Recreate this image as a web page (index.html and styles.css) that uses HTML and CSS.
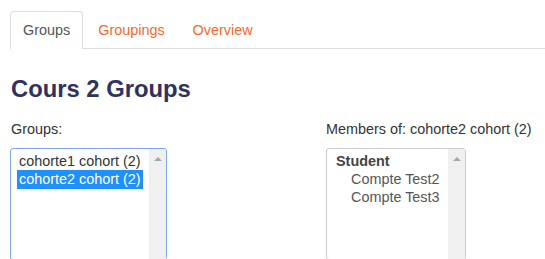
FILE: index.html
```html
<!DOCTYPE html>
<html>
<head>
<meta charset="utf-8">
<link rel="stylesheet" href="styles.css">
</head>
<body>
<ul class="tabs">
  <li class="tab active"><span>Groups</span></li>
  <li class="tab"><a href="#">Groupings</a></li>
  <li class="tab"><a href="#">Overview</a></li>
</ul>
<h2 class="title">Cours 2 Groups</h2>
<div class="columns">
  <div class="col col-left">
    <div class="label">Groups:</div>
    <div class="listbox focused">
      <div class="items">
        <div class="item">cohorte1 cohort (2)</div>
        <div class="item selected">cohorte2 cohort (2)</div>
      </div>
      <div class="scrollbar"><span class="arrow"></span></div>
    </div>
  </div>
  <div class="col col-right">
    <div class="label">Members of: cohorte2 cohort (2)</div>
    <div class="listbox members">
      <div class="items">
        <div class="item group">Student</div>
        <div class="item indent">Compte Test2</div>
        <div class="item indent">Compte Test3</div>
      </div>
      <div class="scrollbar"><span class="arrow"></span></div>
    </div>
  </div>
</div>
</body>
</html>
```
FILE: styles.css
```css
html, body {
  margin: 0;
  padding: 0;
  background: #fff;
  font-family: "Liberation Sans", Arial, sans-serif;
  font-size: 14.4px;
  color: #333;
  overflow: hidden;
}
.tabs {
  list-style: none;
  margin: 11px 0 0 10px;
  padding: 0;
  display: flex;
  border-bottom: 1px solid #ddd;
  height: 37px;
}
.tab {
  margin-right: 2px;
  padding: 8px 12px;
  line-height: 20px;
  border: 1px solid transparent;
  border-bottom: none;
  border-radius: 4px 4px 0 0;
}
.tab.active {
  border-color: #ddd;
  background: #fff;
  color: #555;
  height: 21px;
  margin-bottom: -1px;
}
.tab a {
  color: #f9692a;
  text-decoration: none;
}
.title {
  margin: 26px 0 0 11px;
  font-size: 23.8px;
  font-weight: bold;
  color: #30315f;
  line-height: 28px;
}
.columns {
  display: flex;
  margin-top: 17px;
}
.col-left { margin-left: 10px; width: 316px; }
.label {
  line-height: 18px;
  height: 18px;
  margin-left: 1px;
}
.col-right .label { margin-left: 0; }
.listbox {
  margin-top: 10px;
  height: 112px;
  display: flex;
  border: 1px solid #ccc;
  border-radius: 3px;
  box-sizing: border-box;
}
.focused {
  width: 157px;
  border-color: #7ea6ee;
}
.members { width: 140px; }
.items {
  flex: 1;
  padding: 3px 5px 0 6px;
  line-height: 18px;
}
.item { white-space: nowrap; padding-left: 2px; }
.selected {
  background: #1e90ff;
  color: #fff;
  line-height: 19px;
  width: 124px;
}
.group { font-weight: bold; padding-left: 3px; color: #444; }
.indent { padding-left: 18px; color: #555; }
.members .items { padding-left: 6px; padding-top: 3px; }
.scrollbar {
  width: 17px;
  background: #f0f0f0;
  position: relative;
  border-radius: 0 2px 0 0;
}
.arrow {
  position: absolute;
  left: 5px;
  top: 8px;
  width: 0;
  height: 0;
  border-left: 4px solid transparent;
  border-right: 4px solid transparent;
  border-bottom: 4px solid #a6a6a6;
}
```
